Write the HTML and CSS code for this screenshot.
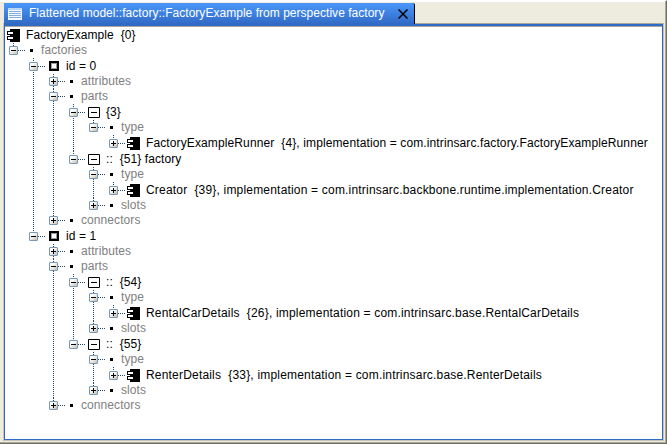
FILE: index.html
```html
<!DOCTYPE html>
<html lang="en">
<head>
<meta charset="utf-8">
<title>Flattened model</title>
<link rel="stylesheet" href="styles.css">
</head>
<body>
<svg width="0" height="0" class="defs">
  <symbol id="component" viewBox="0 0 13 13"><path d="M3 0h10v13H3v-2H0V8h3V6H0V2h3z" fill="#000"/><path d="M1 3h5v2H1zM1 8h5v2H1z" fill="#fff"/><path d="M0 2h7v1H0zM0 5h7v1H0zM0 7h7v1H0zM0 10h7v1H0zM0 2h1v4H0zM0 7h1v4H0z" fill="#000"/></symbol>
  <symbol id="square" viewBox="0 0 13 13"><path d="M2 1h10v10H2z" fill="#000"/><path d="M4 3h6v6H4z" fill="#999"/><path d="M5 4h4v4H5z" fill="#fff"/></symbol>
  <symbol id="part" viewBox="0 0 13 13"><path d="M1.5 1.5h11v10h-11z" fill="#fff" stroke="#000"/><path d="M4 6h6v1H4z"/></symbol>
</svg>
<div class="frame">
  <header class="tabs">
    <div class="tab">
      <svg class="list-icon" width="14" height="12" viewBox="0 0 14 12"><path d="M0 0h14v12H0z" fill="#f4f8ff"/><path d="M0 0h14v2H0z" fill="#b9d5fa"/><path d="M1 3h12v1H1zM1 5h12v1H1zM1 7h12v1H1zM1 9h12v1H1z" fill="#85aee8"/></svg>
      <span class="title">Flattened model::factory::FactoryExample from perspective factory</span>
      <svg class="close" width="10" height="10" viewBox="0 0 10 10"><path d="M.5.5l9 9M9.5.5l-9 9" stroke="#000" stroke-width="1.5"/></svg>
    </div>
  </header>
  <main class="panel">
    <div class="row icon root"><svg class="glyph"><use href="#component"/></svg><span class="label">FactoryExample&nbsp; {0}</span></div>
    <ul class="tree">
      <li><div class="row"><i class="toggle"></i><b class="dot"></b><span class="label">factories</span></div>
        <ul>
          <li><div class="row icon"><i class="toggle"></i><svg class="glyph"><use href="#square"/></svg><span class="label">id = 0</span></div>
            <ul>
              <li><div class="row"><i class="toggle plus"></i><b class="dot"></b><span class="label">attributes</span></div></li>
              <li><div class="row"><i class="toggle"></i><b class="dot"></b><span class="label">parts</span></div>
                <ul>
                  <li><div class="row icon"><i class="toggle"></i><svg class="glyph"><use href="#part"/></svg><span class="label">{3}</span></div>
                    <ul>
                      <li><div class="row"><i class="toggle"></i><b class="dot"></b><span class="label">type</span></div>
                        <ul><li><div class="row icon"><i class="toggle plus"></i><svg class="glyph"><use href="#component"/></svg><span class="label medium">FactoryExampleRunner&nbsp; {4}, implementation = com.intrinsarc.factory.FactoryExampleRunner</span></div></li></ul>
                      </li>
                    </ul>
                  </li>
                  <li><div class="row icon"><i class="toggle"></i><svg class="glyph"><use href="#part"/></svg><span class="label">::&nbsp; {51} factory</span></div>
                    <ul>
                      <li><div class="row"><i class="toggle"></i><b class="dot"></b><span class="label">type</span></div>
                        <ul><li><div class="row icon"><i class="toggle plus"></i><svg class="glyph"><use href="#component"/></svg><span class="label wide">Creator&nbsp; {39}, implementation = com.intrinsarc.backbone.runtime.implementation.Creator</span></div></li></ul>
                      </li>
                      <li><div class="row"><i class="toggle plus"></i><b class="dot"></b><span class="label">slots</span></div></li>
                    </ul>
                  </li>
                </ul>
              </li>
              <li><div class="row"><i class="toggle plus"></i><b class="dot"></b><span class="label">connectors</span></div></li>
            </ul>
          </li>
          <li><div class="row icon"><i class="toggle"></i><svg class="glyph"><use href="#square"/></svg><span class="label">id = 1</span></div>
            <ul>
              <li><div class="row"><i class="toggle plus"></i><b class="dot"></b><span class="label">attributes</span></div></li>
              <li><div class="row"><i class="toggle"></i><b class="dot"></b><span class="label">parts</span></div>
                <ul>
                  <li><div class="row icon"><i class="toggle"></i><svg class="glyph"><use href="#part"/></svg><span class="label">::&nbsp; {54}</span></div>
                    <ul>
                      <li><div class="row"><i class="toggle"></i><b class="dot"></b><span class="label">type</span></div>
                        <ul><li><div class="row icon"><i class="toggle plus"></i><svg class="glyph"><use href="#component"/></svg><span class="label wide">RentalCarDetails&nbsp; {26}, implementation = com.intrinsarc.base.RentalCarDetails</span></div></li></ul>
                      </li>
                      <li><div class="row"><i class="toggle plus"></i><b class="dot"></b><span class="label">slots</span></div></li>
                    </ul>
                  </li>
                  <li><div class="row icon"><i class="toggle"></i><svg class="glyph"><use href="#part"/></svg><span class="label">::&nbsp; {55}</span></div>
                    <ul>
                      <li><div class="row"><i class="toggle"></i><b class="dot"></b><span class="label">type</span></div>
                        <ul><li><div class="row icon"><i class="toggle plus"></i><svg class="glyph"><use href="#component"/></svg><span class="label wide">RenterDetails&nbsp; {33}, implementation = com.intrinsarc.base.RenterDetails</span></div></li></ul>
                      </li>
                      <li><div class="row"><i class="toggle plus"></i><b class="dot"></b><span class="label">slots</span></div></li>
                    </ul>
                  </li>
                </ul>
              </li>
              <li><div class="row"><i class="toggle plus"></i><b class="dot"></b><span class="label">connectors</span></div></li>
            </ul>
          </li>
        </ul>
      </li>
    </ul>
  </main>
</div>
</body>
</html>
```
FILE: styles.css
```css
* { box-sizing: border-box; }
body { margin: 0; background: #fff; font: 12px/15px "Liberation Sans", Arial, sans-serif; color: #000; }
.defs { display: block; height: 0; }
.frame {
  height: 444px;
  padding: 2px 2px 2px 3px;
  background: #eeebdf;
  border-right: 1px solid #716f64;
  border-bottom: 1px solid #716f64;
  border-top: 1px solid #fff;
  display: flex;
  flex-direction: column;
  box-shadow: inset -1px -1px #aca899, inset 0 1px #fff;
}
.tabs { height: 20px; display: flex; }
.tab {
  position: relative;
  width: 411px;
  height: 21px;
  margin-left: 1px;
  padding: 0 6px 0 4px;
  display: flex;
  align-items: center;
  background: linear-gradient(#4a98fb, #316ac5);
  border-right: 1px solid #000;
  border-top-right-radius: 2px;
  color: #fff;
}
.list-icon { margin-right: 7px; }
.title { white-space: nowrap; letter-spacing: .03px; }
.close { margin-left: auto; }
.panel {
  flex: 1;
  border: 1px solid #aca899;
  border-left-color: #c8c4b8;
  border-right-color: #c5c2b8;
  border-bottom-color: #c5c2b8;
  background: #fff;
  box-shadow: inset 0 0 0 1px #316ac5, inset 0 2px #316ac5, inset 0 3px #aca899;
  padding: 3px 2px 2px;
}
ul { list-style: none; margin: 0; padding: 0 0 0 20px; }
.tree { padding-left: 3px; }
li { position: relative; }
li::before {
  content: "";
  position: absolute;
  left: 4px;
  top: 0;
  bottom: 0;
  width: 1px;
  background: repeating-linear-gradient(#214770 0 1px, transparent 1px 2px);
}
li:last-child::before { bottom: auto; height: 6px; }
.row { display: flex; align-items: center; height: 15px; color: #808080; white-space: pre; }
.row.icon { height: 16px; color: #000; }
.label { letter-spacing: .08px; }
.label.medium { letter-spacing: .117px; }
.label.wide { letter-spacing: .19px; }
.toggle {
  position: relative;
  flex: none;
  width: 9px;
  height: 9px;
  border: 1px solid #7898b5;
  border-radius: 1px;
  background: linear-gradient(#000, #000) center / 5px 1px no-repeat, linear-gradient(135deg, #fff 30%, #c6bfb0);
  margin-right: 13px;
}
.toggle.plus {
  background: linear-gradient(#000, #000) center / 5px 1px no-repeat, linear-gradient(#000, #000) center / 1px 5px no-repeat, linear-gradient(135deg, #fff 30%, #c6bfb0);
}
.toggle::after {
  content: "";
  position: absolute;
  left: 8px;
  top: 3px;
  width: 7px;
  height: 1px;
  background: repeating-linear-gradient(90deg, #214770 0 1px, transparent 1px 2px);
}
.dot { width: 3px; height: 3px; background: #000; margin: 0 8px 0 -1px; }
.glyph { flex: none; width: 13px; height: 13px; margin: 0 6px 0 -4px; }
.root { padding-left: 1px; }
.root .glyph { margin-left: 0; }
```
